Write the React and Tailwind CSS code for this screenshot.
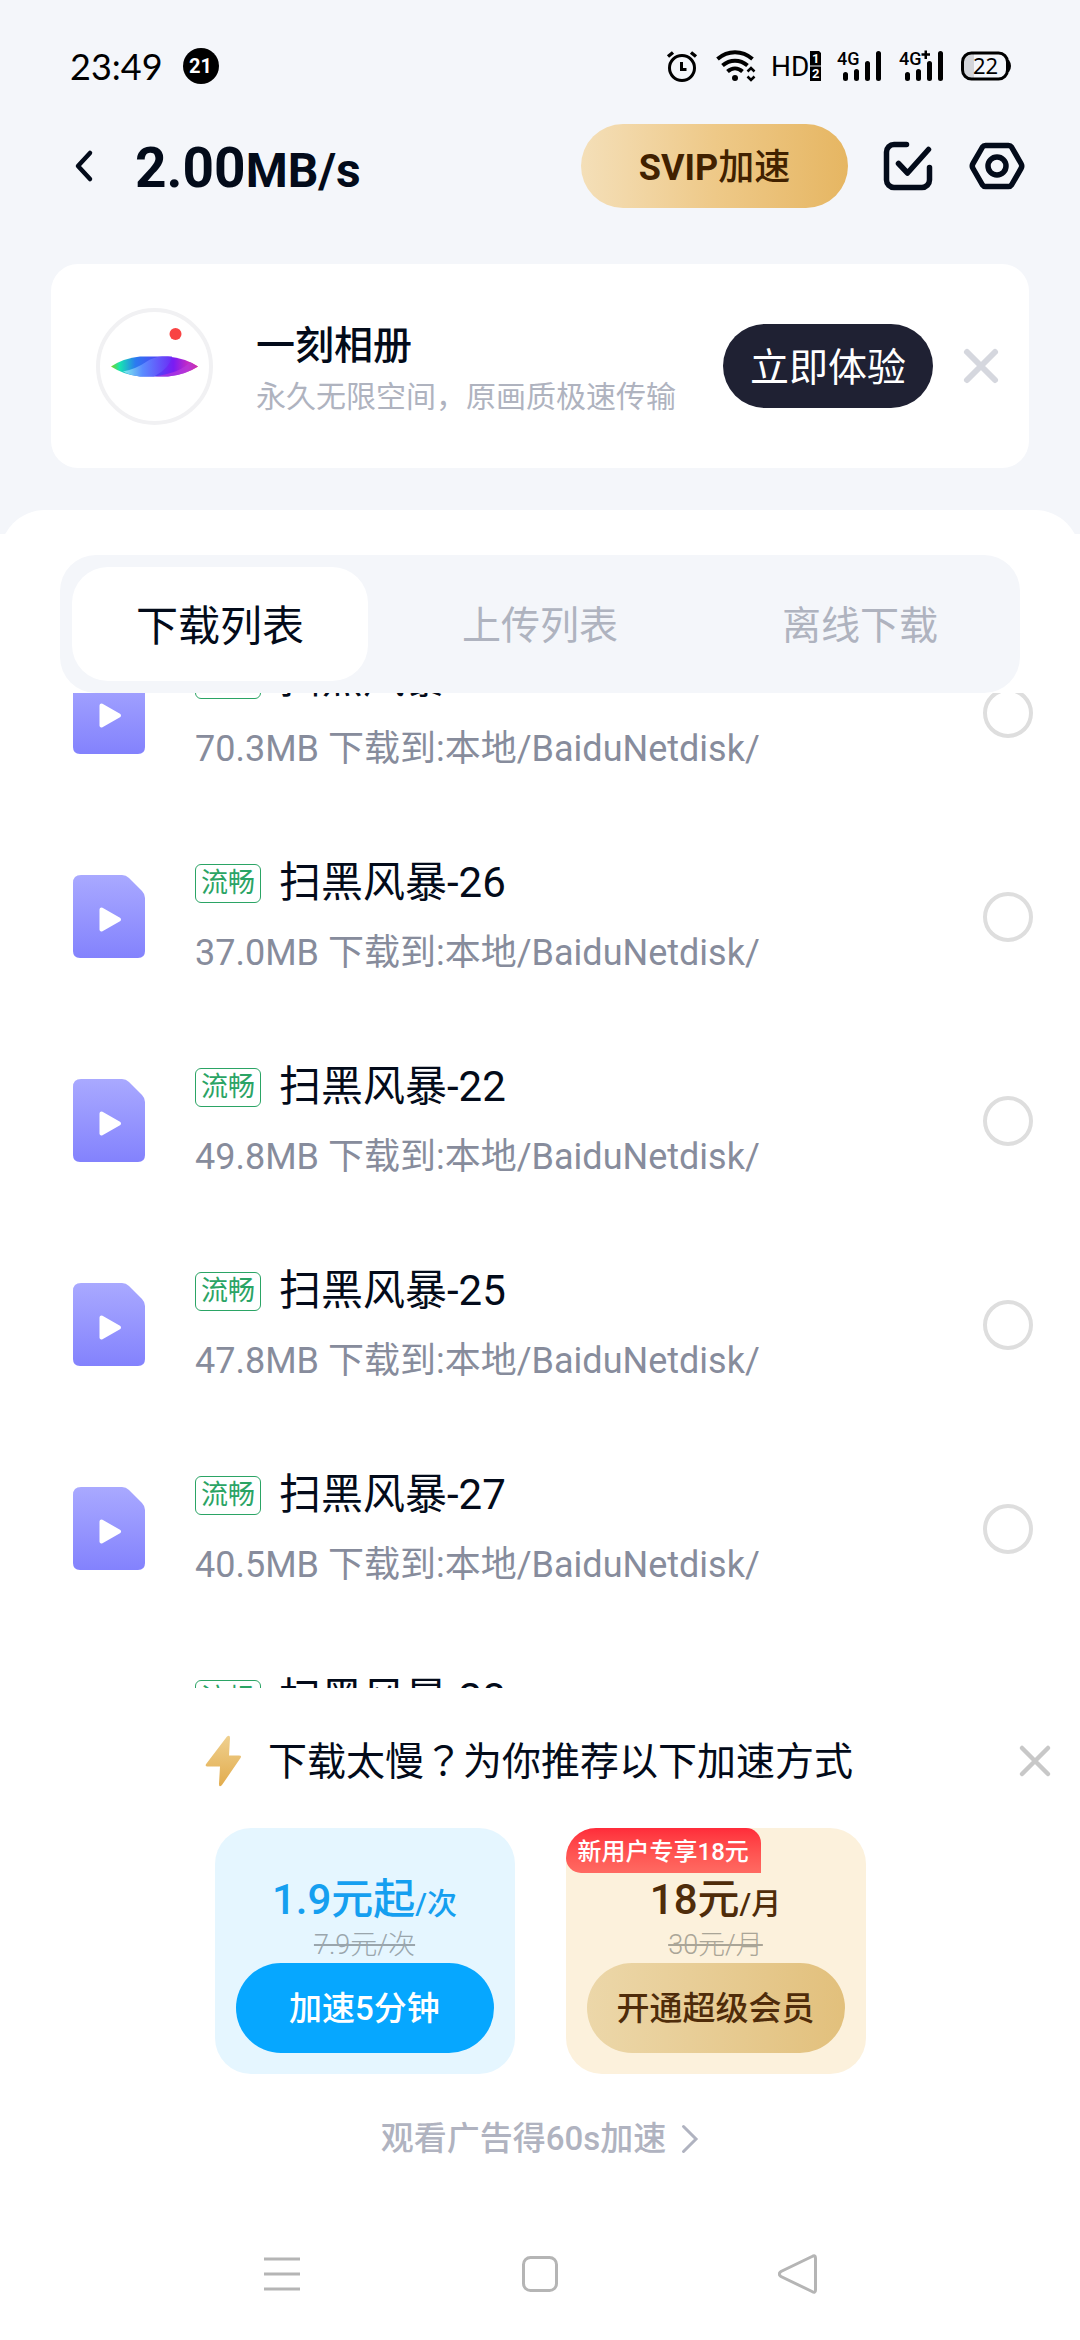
import { useState } from "react";

const tabs = ["下载列表", "上传列表", "离线下载"];

const downloads = [
  { id: "24", name: "扫黑风暴-24", size: "70.3MB" },
  { id: "26", name: "扫黑风暴-26", size: "37.0MB" },
  { id: "22", name: "扫黑风暴-22", size: "49.8MB" },
  { id: "25", name: "扫黑风暴-25", size: "47.8MB" },
  { id: "27", name: "扫黑风暴-27", size: "40.5MB" },
  { id: "28", name: "扫黑风暴-28", size: "45.2MB" },
];

function Signal({ plus }) {
  return (
    <svg width="46" height="32" viewBox="0 0 46 32">
      <text x="0" y="15" fontSize="18" fontWeight="500" fontFamily="Roboto, sans-serif">
        4G
      </text>
      {plus && <path d="M22.500 4.500H31M26.750 0.500V9" stroke="#000" strokeWidth="2.500" />}
      <g stroke="#000" strokeWidth="5" strokeLinecap="round">
        <path d="M8.500 24.500V28.500M19.500 21.500V28.500M30.500 13.500V28.500M41.500 3.500V28.500" />
      </g>
    </svg>
  );
}

function StatusBar() {
  return (
    <div className="flex h-9 items-center justify-between pl-[70px] pr-[67px] text-black">
      <div className="flex items-center gap-5">
        <span className="font-['Lato'] text-4xl leading-9">23:49</span>
        <span className="flex size-9 items-center justify-center rounded-full bg-black text-xl font-bold text-white">
          21
        </span>
      </div>
      <div className="flex items-center gap-4">
        {/* Alarm */}
        <svg width="34" height="32" viewBox="0 0 34 32" fill="none" stroke="#000">
          <circle cx="16" cy="18" r="12.500" strokeWidth="3" />
          <path d="M15.500 12V19.500H20.500" strokeWidth="3" />
          <path d="M2 6.500L7 2.500M30 6.500L25 2.500" strokeWidth="3.500" />
        </svg>
        {/* Wifi */}
        <svg width="40" height="32" viewBox="0 0 40 32" fill="none" stroke="#000">
          <path d="M1.500 9C12 0 26 0 36.500 9" strokeWidth="4" />
          <path d="M6.500 15.500C14 9 24 9 31.500 15.500" strokeWidth="4" />
          <path d="M11.500 21.500C16 17.500 22 17.500 26.500 21.500" strokeWidth="4" />
          <circle cx="19" cy="28" r="3" fill="#000" stroke="none" />
          <path d="M31.500 21.500L35 18L38.500 21.500M31.500 26.500L35 30L38.500 26.500" strokeWidth="2.500" />
        </svg>
        <svg width="49" height="32" viewBox="0 0 49 32">
          <text x="-1" y="26" fontSize="28" fontFamily="Roboto, sans-serif">
            HD
          </text>
          <path d="M38 1H47L49 3V31H38Z" />
          <g fill="#fff" fontSize="13" fontWeight="bold" fontFamily="Roboto, sans-serif">
            <text x="40" y="13">1</text>
            <text x="40" y="28">2</text>
          </g>
          <path d="M38 16H49" stroke="#f4f6fa" />
        </svg>
        <Signal />
        <Signal plus />
        <svg width="52" height="32" viewBox="0 0 52 32">
          <path d="M11 3.500H13V28.500H11A8 8 0 0 1 3 20.500V11.500A8 8 0 0 1 11 3.500Z" fill="#d3d5da" />
          <rect x="1.500" y="3" width="45" height="26" rx="9" fill="none" stroke="#000" strokeWidth="3" />
          <path d="M46.500 10H48Q50 13 50 16T48 22H46.500Z" />
          <text x="24.500" y="24" fontSize="22" textAnchor="middle" fontFamily="'Noto Sans', sans-serif">
            22
          </text>
        </svg>
      </div>
    </div>
  );
}

function Header() {
  return (
    <header className="mt-10 flex h-[84px] items-center pl-[74px] pr-[55px]">
      <button aria-label="返回">
        <svg width="20" height="36" viewBox="0 0 20 36" fill="none">
          <path d="M16 5L4 18L16 31" stroke="#030b1a" strokeWidth="4.500" strokeLinecap="round" strokeLinejoin="round" />
        </svg>
      </button>
      <h1 className="ml-[41px] flex-1 pt-1 text-[55px] leading-[60px] font-bold text-[#030b1a]">
        2.00<span className="text-[48px] leading-none">MB/s</span>
      </h1>
      <button className="h-[84px] w-[267px] rounded-full bg-linear-to-r from-[#f4dfb8] via-[#eec988] to-[#e6b662] pt-1 text-4xl font-medium text-[#412100]">
        <span className="font-bold">SVIP</span>加速
      </button>
      <button aria-label="选择" className="ml-[34px]">
        <svg width="52" height="52" viewBox="0 0 52 52" fill="none" stroke="#030b1a" strokeWidth="5.500" strokeLinecap="round" strokeLinejoin="round">
          <path d="M24.500 4.500H12A7.500 7.500 0 0 0 4.500 12V40A7.500 7.500 0 0 0 12 47.500H40A7.500 7.500 0 0 0 47.500 40V27.500" />
          <path d="M16.500 23.500L25.500 33L46.500 9.500" />
        </svg>
      </button>
      <button aria-label="设置" className="ml-[35px]">
        <svg width="56" height="52" viewBox="0 0 56 52" fill="none" stroke="#030b1a" strokeWidth="5.500" strokeLinejoin="round">
          <path d="M16.500 5.500H39.500Q41.500 5.500 42.500 7L52 23.500Q53.500 26 52 28.500L42.500 45Q41.500 46.500 39.500 46.500H16.500Q14.500 46.500 13.500 45L4 28.500Q2.500 26 4 23.500L13.500 7Q14.500 5.500 16.500 5.500Z" />
          <circle cx="28" cy="26" r="9" />
        </svg>
      </button>
    </header>
  );
}

function AlbumLogo() {
  return (
    <svg width="117" height="117" viewBox="0 0 117 117" className="shrink-0">
      <defs>
        <linearGradient id="lens" x1="0" x2="1">
          <stop offset="0" stopColor="#7ed321" />
          <stop offset="0.1" stopColor="#16e5b0" />
          <stop offset="0.28" stopColor="#2b7bf0" />
          <stop offset="0.5" stopColor="#4b4cf5" />
          <stop offset="0.72" stopColor="#7a1cf3" />
          <stop offset="0.88" stopColor="#c42bc4" />
          <stop offset="1" stopColor="#f0114a" />
        </linearGradient>
        <linearGradient id="lensLight" x1="0" x2="1">
          <stop offset="0" stopColor="#7ff0ea" />
          <stop offset="0.4" stopColor="#5a8bff" />
          <stop offset="1" stopColor="#6b2df6" />
        </linearGradient>
      </defs>
      <circle cx="58.500" cy="58.500" r="56.500" fill="#fff" stroke="#f1f1f3" strokeWidth="4" />
      <circle cx="79.500" cy="26" r="6" fill="#f94444" />
      <path d="M15 58.500Q28 50 44 48.500H72Q89 50 102 58.500Q89 67 72 68.500H44Q28 67 15 58.500Z" fill="url(#lens)" />
      <path d="M27 63.500Q40 61 50 54Q57 49 66 48.500H76Q74 60 58 68.500H44Q34 67.500 27 63.500Z" fill="url(#lensLight)" />
      <path d="M58 68.500Q84 65 94 54L102 58.500Q89 67 72 68.500Z" fill="#b53bdc" opacity="0.7" />
    </svg>
  );
}

function Banner() {
  return (
    <section className="mx-[51px] mt-14 flex h-[204px] items-center rounded-[27px] bg-white pl-[45px] pr-[29px]">
      <AlbumLogo />
      <div className="ml-[43px] flex-1 pt-2">
        <h2 className="text-[39px] leading-[54px] font-medium text-[#030b1a]">一刻相册</h2>
        <p className="text-[30px] leading-[48px] text-[#afb3bf]">永久无限空间，原画质极速传输</p>
      </div>
      <button className="h-[84px] w-[210px] rounded-full bg-[#1f2133] pt-1 text-[39px] text-white">立即体验</button>
      <button aria-label="关闭推广" className="ml-[29px]">
        <svg width="38" height="38" viewBox="0 0 38 38">
          <path d="M5 5L33 33M33 5L5 33" stroke="#d5d7de" strokeWidth="6" strokeLinecap="round" />
        </svg>
      </button>
    </section>
  );
}

function FileIcon() {
  return (
    <svg width="72" height="84" viewBox="0 0 72 84" className="shrink-0">
      <defs>
        <linearGradient id="file" x1="0" y1="0" x2="0" y2="1">
          <stop offset="0" stopColor="#a9a9ff" />
          <stop offset="1" stopColor="#8382fd" />
        </linearGradient>
      </defs>
      <path d="M8 0H49Q53 0 56 3L69 16Q72 19 72 23V76Q72 83 65 83H7Q0 83 0 76V8Q0 0 8 0Z" fill="url(#file)" />
      <path d="M28.500 34.500L46 44.500L28.500 54.500Z" fill="#fff" stroke="#fff" strokeWidth="4" strokeLinejoin="round" />
    </svg>
  );
}

function DownloadRow({ item }) {
  return (
    <li className="flex h-[204px] items-center pl-[73px] pr-[47px]">
      <FileIcon />
      <div className="ml-[50px] flex flex-1 flex-col gap-[22px] pt-0.5">
        <label htmlFor={`file-${item.id}`} className="flex h-12 items-center gap-[18px] text-[42px] leading-[48px] text-[#030b1a]">
          <span className="flex h-[39px] w-[66px] items-center justify-center rounded-md border border-[#2ba465] text-[27px] text-[#2ba465]">
            流畅
          </span>
          {item.name}
        </label>
        <p className="text-4xl leading-[48px] text-[#878c9c]">{item.size} 下载到:本地/BaiduNetdisk/</p>
      </div>
      <input
        id={`file-${item.id}`}
        type="checkbox"
        className="size-[50px] appearance-none rounded-full border-4 border-[#dedede] checked:bg-[#06a7ff]"
      />
    </li>
  );
}

function SpeedPanel() {
  return (
    <section className="bg-white pt-[45px]">
      <div className="flex h-14 items-center pl-[205px] pr-[27px]">
        <svg width="36" height="52" viewBox="0 0 36 52">
          <defs>
            <linearGradient id="bolt" x1="0" y1="0" x2="0" y2="1">
              <stop offset="0" stopColor="#efd08f" />
              <stop offset="1" stopColor="#e2ac4d" />
            </linearGradient>
          </defs>
          <path d="M22 1.500Q25 -0.500 25 3L24 20.500H34Q37 20.500 35.500 23L17 50Q14 53 14 49L15 31.500H2Q-0.500 31 1.500 28.500Z" fill="url(#bolt)" />
        </svg>
        <h2 className="ml-[27px] flex-1 pt-0.5 text-[39px] leading-[56px] text-[#030b1a]">
          下载太慢<span className="font-['Noto_Sans_CJK_TC',sans-serif] leading-none">？</span>为你推荐以下加速方式
        </h2>
        <button aria-label="关闭推荐">
          <svg width="36" height="36" viewBox="0 0 36 36">
            <path d="M5 5L31 31M31 5L5 31" stroke="#c8c8c8" strokeWidth="4.500" strokeLinecap="round" />
          </svg>
        </button>
      </div>

      <div className="mt-[39px] flex justify-center gap-[51px]">
        <div className="flex w-[300px] flex-col items-center rounded-[36px] bg-[#e5f6ff] px-[21px] pt-[45px] pb-[21px]">
          <p className="text-[42px] leading-[54px] font-medium text-[#159ff0]">
            1.9元起<span className="text-[30px] leading-none">/次</span>
          </p>
          <del className="text-[27px] leading-9 font-light text-[#9aa6ad]">7.9元/次</del>
          <button className="h-[90px] w-full rounded-full bg-[#06a7ff] pt-0.5 text-[33px] font-medium text-white">加速5分钟</button>
        </div>
        <div className="relative flex w-[300px] flex-col items-center rounded-[36px] bg-[#fcf1dc] px-[21px] pt-[45px] pb-[21px]">
          <span className="absolute top-0 left-0 h-[45px] rounded-tl-[36px] rounded-tr-[18px] rounded-bl-[18px] bg-linear-to-b from-[#ff2b3a] to-[#ff6a62] px-3 text-2xl leading-[48px] font-medium whitespace-nowrap text-white">
            新用户专享18元
          </span>
          <p className="text-[42px] leading-[54px] font-medium text-[#4f2c0a]">
            18元<span className="text-[30px] leading-none">/月</span>
          </p>
          <del className="text-[27px] leading-9 font-light text-[#aaa597]">30元/月</del>
          <button className="h-[90px] w-full rounded-full bg-linear-to-r from-[#ecd7a9] to-[#e2c07c] pt-0.5 text-[33px] font-medium text-[#4f2c0a]">
            开通超级会员
          </button>
        </div>
      </div>

      <a href="#ad" className="mt-[41px] flex items-center justify-center gap-[15px] text-[33px] leading-[48px] font-medium text-[#b0b3c0]">
        观看广告得60s加速
        <svg width="18" height="30" viewBox="0 0 18 30" fill="none">
          <path d="M2.500 2.500L15 15L2.500 27.500" stroke="#b0b3c0" strokeWidth="3" strokeLinecap="round" />
        </svg>
      </a>
    </section>
  );
}

function NavBar() {
  return (
    <nav className="flex items-center justify-between bg-white px-[262px] pt-[91px] pb-[46px]">
      <button aria-label="菜单">
        <svg width="40" height="40" viewBox="0 0 40 40">
          <path d="M2 5H38M2 20H38M2 35H38" stroke="#b5b5b5" strokeWidth="3" />
        </svg>
      </button>
      <button aria-label="主页">
        <svg width="40" height="40" viewBox="0 0 40 40">
          <rect x="3.500" y="3.500" width="33" height="33" rx="7" fill="none" stroke="#b5b5b5" strokeWidth="3" />
        </svg>
      </button>
      <button aria-label="后退">
        <svg width="40" height="40" viewBox="0 0 40 40">
          <path d="M34 2.500Q37.500 0.500 37.500 4V36Q37.500 39.500 34 37.500L3 22.500Q-0.500 20 3 17.500Z" fill="none" stroke="#b5b5b5" strokeWidth="3" />
        </svg>
      </button>
    </nav>
  );
}

export default function App() {
  const [activeTab, setActiveTab] = useState(0);

  return (
    <div className="flex h-screen flex-col overflow-hidden bg-[#f4f6fa] pt-12 font-['Roboto','Noto_Sans_CJK_SC',sans-serif]">
      <StatusBar />
      <Header />
      <Banner />

      {/* Rounded top edge of the white sheet */}
      <div className="mt-[42px] h-6 shrink-0 overflow-hidden">
        <div className="h-24 rounded-t-[45px] bg-white" />
      </div>

      <main className="flex min-h-0 flex-1 flex-col bg-white pt-[21px]">
        <div role="tablist" className="mx-[60px] grid h-[138px] shrink-0 grid-cols-3 rounded-[36px] bg-[#f4f6fa]">
          {tabs.map((tab, index) => (
            <button
              key={tab}
              role="tab"
              aria-selected={index === activeTab}
              onClick={() => setActiveTab(index)}
              className={
                index === activeTab
                  ? "m-3 rounded-[36px] bg-white pt-1 text-[42px] text-[#030b1a]"
                  : "m-3 rounded-[36px] pt-1 text-[39px] text-[#afb3bf]"
              }
            >
              {tab}
            </button>
          ))}
        </div>

        <div className="min-h-0 flex-1 overflow-hidden">
          <ul className="-mt-[82px]">
            {downloads.map((item) => (
              <DownloadRow key={item.id} item={item} />
            ))}
          </ul>
        </div>
      </main>

      <SpeedPanel />
      <NavBar />
    </div>
  );
}
